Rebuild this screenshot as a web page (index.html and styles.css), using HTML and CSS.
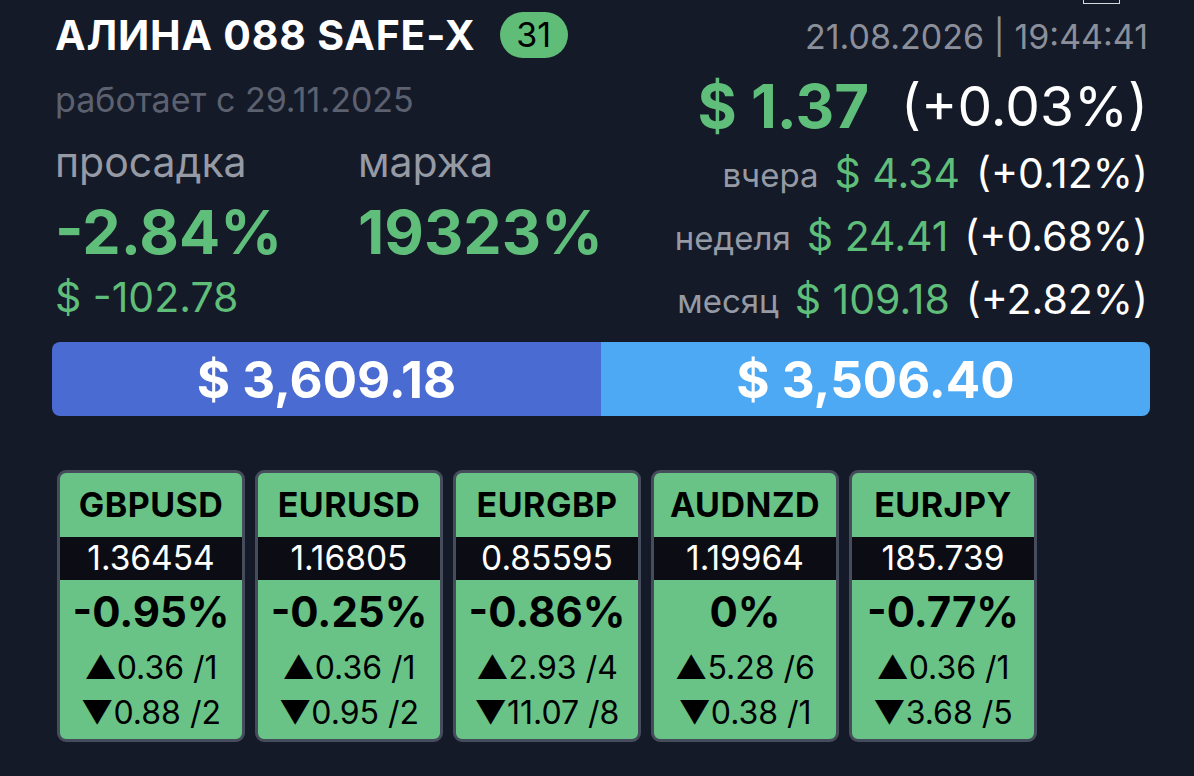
FILE: index.html
```html
<!DOCTYPE html>
<html lang="ru">
<head>
    <meta charset="UTF-8">
    <meta name="viewport" content="width=device-width, initial-scale=1.0">
    <title>АЛИНА 088 SAFE-X</title>
    <link rel="stylesheet" href="styles.css">
</head>
<body>
    <div class="screen">
        <div class="corner-tab"></div>

        <div class="head">
            <div class="left">
                <div class="title-row">
                    <h1 class="title">АЛИНА 088 SAFE-X</h1>
                    <span class="badge">31</span>
                </div>
                <div class="since">работает с 29.11.2025</div>
                <div class="stats">
                    <div class="stat">
                        <div class="label">просадка</div>
                        <div class="big">-2.84%</div>
                        <div class="sub">$ -102.78</div>
                    </div>
                    <div class="stat">
                        <div class="label">маржа</div>
                        <div class="big">19323%</div>
                    </div>
                </div>
            </div>

            <div class="right">
                <div class="stamp">21.08.2026 | 19:44:41</div>
                <div class="today">
                    <span class="profit">$ 1.37</span>
                    <span class="pct">(+0.03%)</span>
                </div>
                <div class="period"><span class="label">вчера</span><span class="money">$ 4.34</span><span class="pct">(+0.12%)</span></div>
                <div class="period"><span class="label">неделя</span><span class="money">$ 24.41</span><span class="pct">(+0.68%)</span></div>
                <div class="period"><span class="label">месяц</span><span class="money">$ 109.18</span><span class="pct">(+2.82%)</span></div>
            </div>
        </div>

        <div class="balance">
            <div class="part balance-part">$ 3,609.18</div>
            <div class="part equity-part">$ 3,506.40</div>
        </div>

        <div class="pairs">
            <div class="pair">
                <div class="sym">GBPUSD</div>
                <div class="price">1.36454</div>
                <div class="chg">-0.95%</div>
                <div class="line">▲0.36 /1</div>
                <div class="line">▼0.88 /2</div>
            </div>
            <div class="pair">
                <div class="sym">EURUSD</div>
                <div class="price">1.16805</div>
                <div class="chg">-0.25%</div>
                <div class="line">▲0.36 /1</div>
                <div class="line">▼0.95 /2</div>
            </div>
            <div class="pair">
                <div class="sym">EURGBP</div>
                <div class="price">0.85595</div>
                <div class="chg">-0.86%</div>
                <div class="line">▲2.93 /4</div>
                <div class="line">▼11.07 /8</div>
            </div>
            <div class="pair">
                <div class="sym">AUDNZD</div>
                <div class="price">1.19964</div>
                <div class="chg">0%</div>
                <div class="line">▲5.28 /6</div>
                <div class="line">▼0.38 /1</div>
            </div>
            <div class="pair">
                <div class="sym">EURJPY</div>
                <div class="price">185.739</div>
                <div class="chg">-0.77%</div>
                <div class="line">▲0.36 /1</div>
                <div class="line">▼3.68 /5</div>
            </div>
        </div>
    </div>
</body>
</html>
```

FILE: styles.css
```css
body {
    margin: 0;
    background-color: #151a28;
    font-family: 'Inter', 'Liberation Sans', sans-serif;
    color: #fff;
}
.screen {
    position: relative;
    height: 776px;
    padding: 0 44px 0 52px;
    overflow: hidden;
}
.corner-tab {
    position: absolute;
    top: -8px;
    left: 1083px;
    width: 35px;
    height: 10px;
    border: 1px solid #d6d8dc;
}

/* top block */
.head {
    display: flex;
    justify-content: space-between;
    align-items: flex-start;
    height: 328px;
}
.left {
    padding: 10px 0 0 3px;
}
.title-row {
    display: flex;
    align-items: center;
    gap: 24px;
    height: 50px;
}
.title {
    margin: 0;
    font-size: 41px;
    font-weight: 700;
    letter-spacing: 0.8px;
    line-height: 50px;
}
.badge {
    width: 68px;
    height: 46px;
    border-radius: 23px;
    background: #5fbd78;
    color: #000;
    font-size: 34px;
    line-height: 46px;
    text-align: center;
}
.since {
    margin-top: 20px;
    font-size: 34px;
    line-height: 40px;
    color: #5c6170;
}
.stats {
    display: flex;
    margin-top: 17px;
}
.stat {
    width: 303px;
}
.label {
    color: #959aa5;
}
.stat .label {
    font-size: 41px;
    line-height: 50px;
}
.big {
    margin-top: 10px;
    font-size: 61px;
    font-weight: 700;
    line-height: 70px;
    color: #5fbe7a;
}
.sub {
    margin-top: 5px;
    font-size: 41px;
    line-height: 50px;
    color: #5fbe7a;
}

.right {
    padding: 17px 2px 0 0;
    text-align: right;
}
.stamp {
    font-size: 34px;
    line-height: 40px;
    color: #8a8f9a;
}
.today {
    margin-top: 14px;
    height: 70px;
    font-size: 55px;
    display: flex;
    justify-content: flex-end;
    align-items: center;
    gap: 32px;
}
.profit {
    font-size: 60px;
    font-weight: 700;
    color: #5fbe7a;
}
.period {
    display: flex;
    justify-content: flex-end;
    align-items: center;
    gap: 16px;
    height: 63px;
    font-size: 41px;
}
.period .label {
    font-size: 33px;
    padding-top: 4px;
}
.money {
    color: #5fbe7a;
}

/* balance bar */
.balance {
    display: flex;
    margin-top: 14px;
    height: 74px;
    border-radius: 8px;
    overflow: hidden;
}
.part {
    flex: 1;
    display: flex;
    align-items: center;
    justify-content: center;
    font-size: 51px;
    font-weight: 700;
}
.balance-part {
    background: #4a6bd1;
}
.equity-part {
    background: #4ea9f4;
}

/* pair cards */
.pairs {
    display: flex;
    gap: 10px;
    margin: 54px 0 0 5px;
}
.pair {
    width: 182px;
    border: 3px solid #454c5b;
    border-radius: 9px;
    background: #69c386;
    color: #000;
    text-align: center;
    padding-bottom: 4px;
    overflow: hidden;
}
.sym {
    font-size: 34px;
    font-weight: 700;
    line-height: 64px;
    letter-spacing: 0.5px;
}
.price {
    background: #0c0d14;
    color: #fff;
    font-size: 33.5px;
    line-height: 43px;
}
.chg {
    margin-top: 6px;
    font-size: 42px;
    font-weight: 700;
    line-height: 52px;
}
.chg + .line {
    margin-top: 7px;
}
.line {
    font-size: 32px;
    line-height: 45px;
}
```
